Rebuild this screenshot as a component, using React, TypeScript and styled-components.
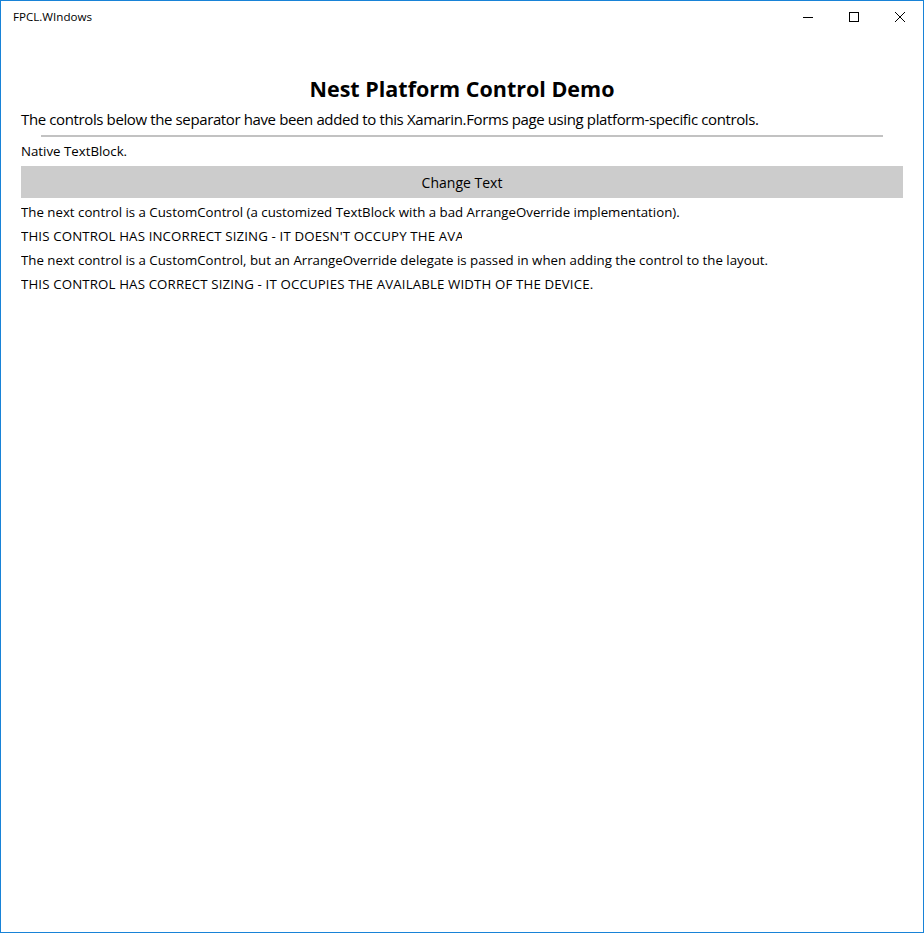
import React from "react";
import styled, { createGlobalStyle } from "styled-components";

const Global = createGlobalStyle`
  html, body { margin: 0; padding: 0; background: #ffffff; }
  body { font-family: "Open Sans", "Noto Sans", sans-serif; color: #000; }
  * { box-sizing: border-box; }
`;

const Window = styled.div`
  width: 924px;
  height: 933px;
  border: 1px solid #1883d7;
  background: #ffffff;
  display: flex;
  flex-direction: column;
`;

const TitleBar = styled.div`
  height: 31px;
  display: flex;
  align-items: center;
  flex-shrink: 0;
`;

const WindowTitle = styled.div`
  flex: 1;
  padding-left: 12px;
  font-size: 11.6px;
  color: #000;
`;

const CaptionButton = styled.div`
  width: 46px;
  height: 31px;
  display: flex;
  align-items: center;
  justify-content: center;
`;

const Content = styled.div`
  display: flex;
  flex-direction: column;
  padding: 0 20px;
`;

const Heading = styled.h1`
  margin: 43px 0 0;
  font-size: 21.5px;
  line-height: 28px;
  font-weight: 700;
  text-align: center;
`;

const Intro = styled.p`
  margin: 4px 0 0;
  font-size: 15px;
  letter-spacing: -0.38px;
  line-height: 24px;
`;

const Separator = styled.div`
  margin: 4px 20px 0;
  height: 2px;
  background: #c2c2c2;
`;

const TextLine = styled.div<{ $clipWidth?: number; $mt?: number; $caps?: boolean }>`
  margin-top: ${(p) => p.$mt ?? 0}px;
  font-size: 13.27px;
  line-height: 24px;
  letter-spacing: ${(p) => (p.$caps ? "0.14px" : "0")};
  white-space: nowrap;
  overflow: hidden;
  ${(p) => (p.$clipWidth ? `width: ${p.$clipWidth}px;` : "")}
`;

const ActionButton = styled.button`
  margin-top: 3px;
  height: 32px;
  border: none;
  background: #cccccc;
  font-family: inherit;
  font-size: 14px;
  color: #000;
  padding: 0;
`;

const MinIcon = () => (
  <svg width="10" height="10" viewBox="0 0 10 10">
    <line x1="0" y1="5.5" x2="10" y2="5.5" stroke="#000" strokeWidth="1" />
  </svg>
);
const MaxIcon = () => (
  <svg width="10" height="10" viewBox="0 0 10 10">
    <rect x="0.5" y="0.5" width="9" height="9" fill="none" stroke="#000" strokeWidth="1" />
  </svg>
);
const CloseIcon = () => (
  <svg width="10" height="10" viewBox="0 0 10 10">
    <path d="M0 0 L10 10 M10 0 L0 10" stroke="#000" strokeWidth="1" />
  </svg>
);

export default function App() {
  return (
    <>
      <Global />
      <Window>
        <TitleBar>
          <WindowTitle>FPCL.WIndows</WindowTitle>
          <CaptionButton><MinIcon /></CaptionButton>
          <CaptionButton><MaxIcon /></CaptionButton>
          <CaptionButton><CloseIcon /></CaptionButton>
        </TitleBar>
        <Content>
          <Heading>Nest Platform Control Demo</Heading>
          <Intro>
            The controls below the separator have been added to this Xamarin.Forms page using platform-specific controls.
          </Intro>
          <Separator />
          <TextLine $mt={2}>Native TextBlock.</TextLine>
          <ActionButton>Change Text</ActionButton>
          <TextLine $mt={2}>
            The next control is a CustomControl (a customized TextBlock with a bad ArrangeOverride implementation).
          </TextLine>
          <TextLine $caps $clipWidth={441}>
            THIS CONTROL HAS INCORRECT SIZING - IT DOESN'T OCCUPY THE AVAILABLE WIDTH OF THE DEVICE.
          </TextLine>
          <TextLine>
            The next control is a CustomControl, but an ArrangeOverride delegate is passed in when adding the control to the layout.
          </TextLine>
          <TextLine $caps>THIS CONTROL HAS CORRECT SIZING - IT OCCUPIES THE AVAILABLE WIDTH OF THE DEVICE.</TextLine>
        </Content>
      </Window>
    </>
  );
}
